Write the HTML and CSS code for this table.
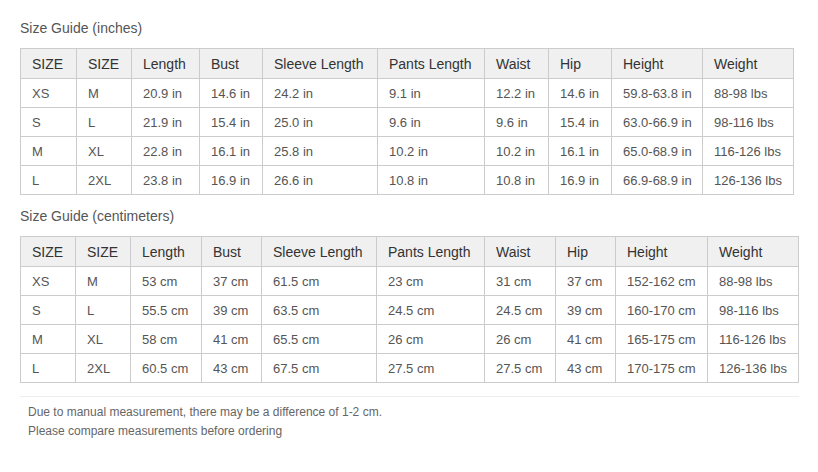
FILE: index.html
```html
<!DOCTYPE html>
<html>
<head>
<meta charset="utf-8">
<link rel="stylesheet" href="styles.css">
</head>
<body>
<div class="page">
  <h3 class="title">Size Guide (inches)</h3>
  <table class="grid grid-in">
    <colgroup>
      <col class="c1"><col class="c2"><col class="c3"><col class="c4"><col class="c5">
      <col class="c6"><col class="c7"><col class="c8"><col class="c9"><col class="c10">
    </colgroup>
    <thead>
      <tr><th>SIZE</th><th>SIZE</th><th>Length</th><th>Bust</th><th>Sleeve Length</th><th>Pants Length</th><th>Waist</th><th>Hip</th><th>Height</th><th>Weight</th></tr>
    </thead>
    <tbody>
      <tr><td>XS</td><td>M</td><td>20.9 in</td><td>14.6 in</td><td>24.2 in</td><td>9.1 in</td><td>12.2 in</td><td>14.6 in</td><td>59.8-63.8 in</td><td>88-98 lbs</td></tr>
      <tr><td>S</td><td>L</td><td>21.9 in</td><td>15.4 in</td><td>25.0 in</td><td>9.6 in</td><td>9.6 in</td><td>15.4 in</td><td>63.0-66.9 in</td><td>98-116 lbs</td></tr>
      <tr><td>M</td><td>XL</td><td>22.8 in</td><td>16.1 in</td><td>25.8 in</td><td>10.2 in</td><td>10.2 in</td><td>16.1 in</td><td>65.0-68.9 in</td><td>116-126 lbs</td></tr>
      <tr><td>L</td><td>2XL</td><td>23.8 in</td><td>16.9 in</td><td>26.6 in</td><td>10.8 in</td><td>10.8 in</td><td>16.9 in</td><td>66.9-68.9 in</td><td>126-136 lbs</td></tr>
    </tbody>
  </table>

  <h3 class="title title-second">Size Guide (centimeters)</h3>
  <table class="grid grid-cm">
    <colgroup>
      <col class="c1"><col class="c2"><col class="c3"><col class="c4"><col class="c5">
      <col class="c6"><col class="c7"><col class="c8"><col class="c9"><col class="c10">
    </colgroup>
    <thead>
      <tr><th>SIZE</th><th>SIZE</th><th>Length</th><th>Bust</th><th>Sleeve Length</th><th>Pants Length</th><th>Waist</th><th>Hip</th><th>Height</th><th>Weight</th></tr>
    </thead>
    <tbody>
      <tr><td>XS</td><td>M</td><td>53 cm</td><td>37 cm</td><td>61.5 cm</td><td>23 cm</td><td>31 cm</td><td>37 cm</td><td>152-162 cm</td><td>88-98 lbs</td></tr>
      <tr><td>S</td><td>L</td><td>55.5 cm</td><td>39 cm</td><td>63.5 cm</td><td>24.5 cm</td><td>24.5 cm</td><td>39 cm</td><td>160-170 cm</td><td>98-116 lbs</td></tr>
      <tr><td>M</td><td>XL</td><td>58 cm</td><td>41 cm</td><td>65.5 cm</td><td>26 cm</td><td>26 cm</td><td>41 cm</td><td>165-175 cm</td><td>116-126 lbs</td></tr>
      <tr><td>L</td><td>2XL</td><td>60.5 cm</td><td>43 cm</td><td>67.5 cm</td><td>27.5 cm</td><td>27.5 cm</td><td>43 cm</td><td>170-175 cm</td><td>126-136 lbs</td></tr>
    </tbody>
  </table>

  <div class="note">
    <p>Due to manual measurement, there may be a difference of 1-2 cm.</p>
    <p>Please compare measurements before ordering</p>
  </div>
</div>
</body>
</html>
```

FILE: styles.css
```css
html, body {
  margin: 0;
  padding: 0;
  background: #ffffff;
}

body {
  font-family: "Liberation Sans", Arial, sans-serif;
  color: #555555;
}

.page {
  padding: 18px 0 0 20px;
}

.title {
  margin: 0 0 10px 0;
  font-size: 14px;
  font-weight: normal;
  line-height: 20px;
  color: #555555;
}

.title-second {
  margin-top: 11px;
}

.grid {
  border-collapse: collapse;
  table-layout: fixed;
}

.grid-in { width: 773px; }
.grid-cm { width: 778px; }

.grid th,
.grid td {
  border: 1px solid #cccccc;
  text-align: left;
  padding: 0 0 0 11px;
  white-space: nowrap;
}

.grid th {
  background: #f0f0f0;
  color: #333333;
  font-size: 14px;
  font-weight: normal;
  height: 29px;
}

.grid td {
  background: #ffffff;
  color: #555555;
  font-size: 13px;
  height: 28px;
}

.grid-in .c1 { width: 56px; }
.grid-in .c2 { width: 55px; }
.grid-in .c3 { width: 68px; }
.grid-in .c4 { width: 63px; }
.grid-in .c5 { width: 115px; }
.grid-in .c6 { width: 107px; }
.grid-in .c7 { width: 64px; }
.grid-in .c8 { width: 63px; }
.grid-in .c9 { width: 91px; }
.grid-in .c10 { width: 91px; }

.grid-cm .c1 { width: 55px; }
.grid-cm .c2 { width: 55px; }
.grid-cm .c3 { width: 71px; }
.grid-cm .c4 { width: 60px; }
.grid-cm .c5 { width: 115px; }
.grid-cm .c6 { width: 108px; }
.grid-cm .c7 { width: 71px; }
.grid-cm .c8 { width: 60px; }
.grid-cm .c9 { width: 92px; }
.grid-cm .c10 { width: 91px; }

.note {
  width: 779px;
  margin-top: 13px;
  border-top: 1px solid #eeeeee;
  padding: 6px 0 0 8px;
  box-sizing: border-box;
}

.note p {
  margin: 0;
  font-size: 12px;
  line-height: 19px;
  color: #666666;
}
```
